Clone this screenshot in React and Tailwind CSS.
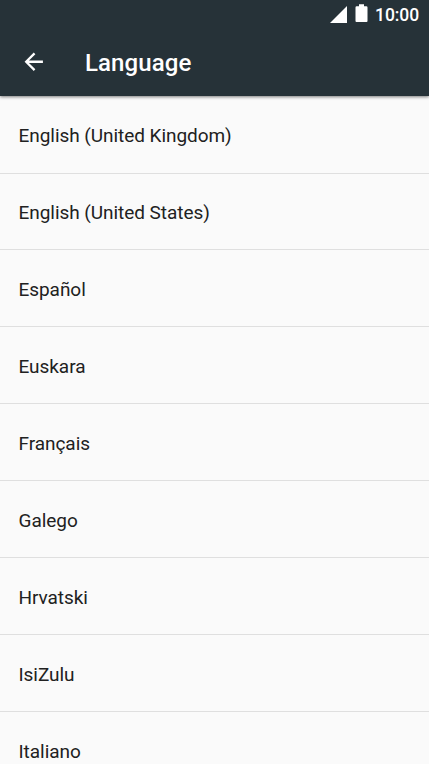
const languages = [
  "English (United Kingdom)",
  "English (United States)",
  "Español",
  "Euskara",
  "Français",
  "Galego",
  "Hrvatski",
  "IsiZulu",
  "Italiano",
];

function StatusBar() {
  return (
    <div className="flex h-[30px] items-start justify-end pr-[10px] text-white">
      <svg className="mt-[6px] h-[17px] w-[17px]" viewBox="0 0 17 17" fill="currentColor">
        <path d="M0 17 17 0v17z" />
      </svg>
      <svg className="ml-[8px] mt-[4px] h-[18px] w-[13px]" viewBox="0 0 13 18" fill="currentColor">
        <path d="M4 .3h5v2h2.3q1.2 0 1.2 1.2v13.6q0 .9-.9.9H1.4q-.9 0-.9-.9V3.5q0-1.2 1.2-1.2H4z" />
      </svg>
      <span className="ml-[7px] mt-[6px] text-[17.5px] font-medium leading-[18px] tracking-[-0.1px]">
        10:00
      </span>
    </div>
  );
}

function BackIcon() {
  return (
    <svg className="size-[27.5px]" viewBox="0 0 24 24" fill="currentColor">
      <path d="M20 11H7.83l5.59-5.59L12 4l-8 8 8 8 1.41-1.41L7.83 13H20z" />
    </svg>
  );
}

function LanguageRow({ name }) {
  return (
    <li className="flex h-[76.9px] shrink-0 items-center border-b border-[#dfdfdf] px-[18.5px] pt-[4px] text-[19px] tracking-[-0.05px] text-[#212121]">
      {name}
    </li>
  );
}

export default function App() {
  return (
    <div className="flex h-screen flex-col overflow-hidden bg-[#fafafa] font-['Roboto',sans-serif]">
      <header className="relative h-24 shrink-0 bg-[#263238] text-white shadow-[0_1px_3px_rgba(0,0,0,0.5)]">
        <StatusBar />
        <div className="flex h-[66px] items-center pl-[20px]">
          <button aria-label="Back" className="-mt-[2px]">
            <BackIcon />
          </button>
          <h1 className="ml-[37.5px] text-2xl font-medium tracking-[0.1px]">Language</h1>
        </div>
      </header>
      <ul className="flex flex-col pt-[0.7px]">
        {languages.map((name) => (
          <LanguageRow key={name} name={name} />
        ))}
      </ul>
    </div>
  );
}
